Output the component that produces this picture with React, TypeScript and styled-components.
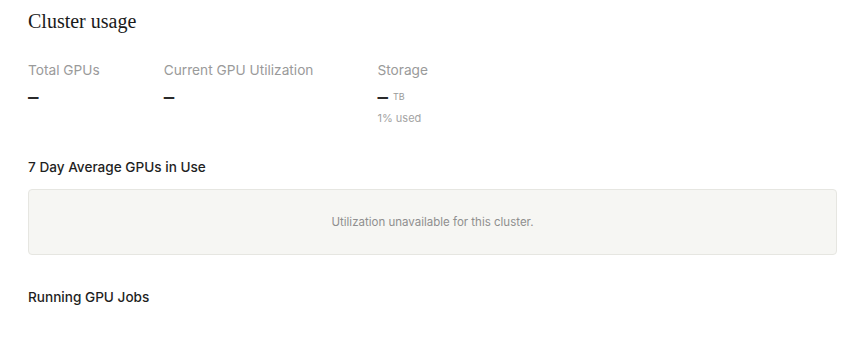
import React from 'react';
import styled, { createGlobalStyle } from 'styled-components';

const GlobalStyle = createGlobalStyle`
  body {
    margin: 0;
    background: #ffffff;
    font-family: Inter, "Noto Sans", sans-serif;
    color: #1f1f1f;
  }
`;

type Stat = {
  label: string;
  value: string;
  unit?: string;
  note?: string;
};

const stats: Stat[] = [
  { label: 'Total GPUs', value: '–' },
  { label: 'Current GPU Utilization', value: '–' },
  { label: 'Storage', value: '–', unit: 'TB', note: '1% used' },
];

const App: React.FC = () => {
  return (
    <Page>
      <GlobalStyle />
      <Title>Cluster usage</Title>
      <StatRow>
        {stats.map((s) => (
          <StatCol key={s.label}>
            <StatLabel>{s.label}</StatLabel>
            <StatValue>
              <Dash>{s.value}</Dash>
              {s.unit && <Unit>{s.unit}</Unit>}
            </StatValue>
            {s.note && <Note>{s.note}</Note>}
          </StatCol>
        ))}
      </StatRow>
      <SectionHeading>7 Day Average GPUs in Use</SectionHeading>
      <EmptyBox>Utilization unavailable for this cluster.</EmptyBox>
      <SectionHeading $top={33}>Running GPU Jobs</SectionHeading>
    </Page>
  );
};

const Page = styled.div`
  display: flex;
  flex-direction: column;
  padding: 8px 13px 0 28px;
`;

const Title = styled.h1`
  margin: 0;
  font-family: "Liberation Serif", serif;
  font-weight: 400;
  font-size: 20px;
  line-height: 26px;
  color: #1a1a1a;
`;

const StatRow = styled.div`
  display: flex;
  gap: 64px;
  margin-top: 27px;
`;

const StatCol = styled.div`
  display: flex;
  flex-direction: column;
`;

const StatLabel = styled.div`
  font-size: 13.7px;
  line-height: 18px;
  color: #9a9a9a;
`;

const StatValue = styled.div`
  display: flex;
  align-items: center;
  gap: 5px;
  height: 18px;
  margin-top: 9px;
`;

const Dash = styled.span`
  font-size: 21px;
  line-height: 18px;
  font-weight: 500;
  color: #2a2a2a;
`;

const Unit = styled.span`
  font-size: 9px;
  line-height: 18px;
  color: #9a9a9a;
`;

const Note = styled.div`
  margin-top: 5px;
  font-size: 11px;
  line-height: 14px;
  color: #a3a3a3;
`;

const SectionHeading = styled.h2<{ $top?: number }>`
  margin: ${(p) => p.$top ?? 33}px 0 0;
  font-size: 13.6px;
  line-height: 18px;
  font-weight: 500;
  color: #1f1f1f;
`;

const EmptyBox = styled.div`
  display: flex;
  align-items: center;
  justify-content: center;
  height: 64px;
  margin-top: 13px;
  background: #f6f6f3;
  border: 1px solid #e6e6e1;
  border-radius: 4px;
  font-size: 11.5px;
  color: #8f8f8f;
`;

export default App;
